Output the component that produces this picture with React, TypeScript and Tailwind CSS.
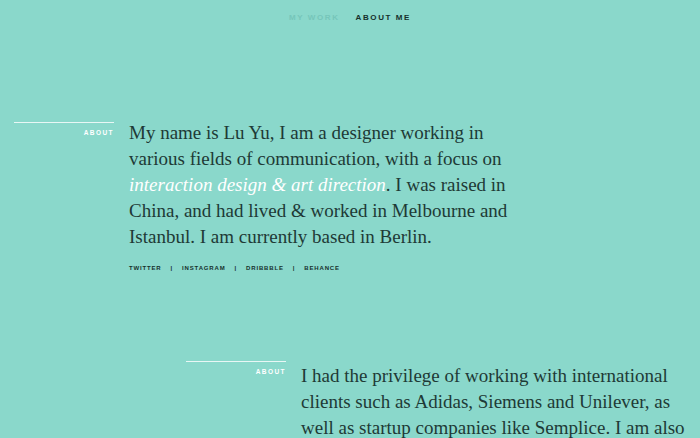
const serif = "font-['Liberation_Serif','DejaVu_Serif',serif]";
const sans = "font-['Liberation_Sans',Arial,sans-serif]";

const links = ["TWITTER", "INSTAGRAM", "DRIBBBLE", "BEHANCE"];

const Label = () => (
  <div className="w-[100px] shrink-0 border-t border-white/80 pt-[7px] text-right leading-none">
    <span className={`${sans} block text-[6.5px] font-bold tracking-[0.22em] text-white`}>ABOUT</span>
  </div>
);

const App = () => {
  return (
    <div className="min-h-[438px] w-full overflow-hidden bg-[#8ad8cb] text-[#1e3a36]">
      {/* nav */}
      <nav className={`${sans} flex justify-center gap-[16px] pt-[12px] text-[8px] font-bold tracking-[0.2em]`}>
        <span className="text-[#76c6ba]">MY WORK</span>
        <span className="text-[#16302c]">ABOUT ME</span>
      </nav>

      {/* about 1 */}
      <section className="mt-[98px] flex gap-[15px] pl-[14px]">
        <Label />
        <div className="-mt-[2px]">
          <p className={`${serif} whitespace-nowrap text-[19px] leading-[26px]`}>
            My name is Lu Yu, I am a designer working in
            <br />
            various fields of communication, with a focus on
            <br />
            <em className="text-white">interaction design &amp; art direction</em>. I was raised in
            <br />
            China, and had lived &amp; worked in Melbourne and
            <br />
            Istanbul. I am currently based in Berlin.
          </p>
          <div className={`${sans} mt-[14px] flex items-center gap-[9px] text-[6px] font-bold tracking-[0.14em] text-[#16302c]`}>
            {links.map((l, i) => (
              <span key={l} className="flex items-center gap-[9px]">
                {i > 0 && <span>|</span>}
                <span>{l}</span>
              </span>
            ))}
          </div>
        </div>
      </section>

      {/* about 2 */}
      <section className="mt-[88px] flex gap-[15px] pl-[186px]">
        <Label />
        <p className={`${serif} mt-[2px] whitespace-nowrap text-[19px] leading-[26px]`}>
          I had the privilege of working with international
          <br />
          clients such as Adidas, Siemens and Unilever, as
          <br />
          well as startup companies like Semplice. I am also
        </p>
      </section>
    </div>
  );
};

export default App;
